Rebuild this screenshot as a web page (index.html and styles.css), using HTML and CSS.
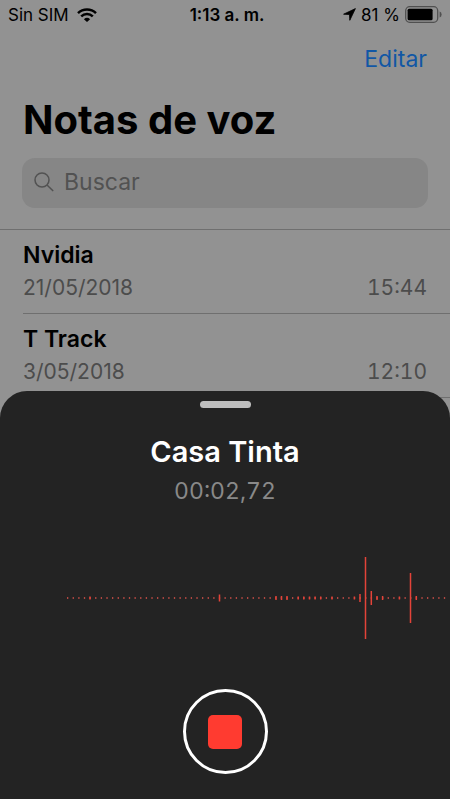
FILE: index.html
```html
<!DOCTYPE html>
<html lang="es">
<head>
<meta charset="utf-8">
<meta name="viewport" content="width=device-width, initial-scale=1">
<title>Notas de voz</title>
<link rel="stylesheet" href="styles.css">
</head>
<body>
<main class="library">
  <header class="status">
    <div class="status-side">
      <span>Sin SIM</span>
      <svg class="wifi" viewBox="0 0 20 14" aria-hidden="true">
        <path d="M1 5.2a13 13 0 0 1 18 0M4.2 8.3a8.4 8.4 0 0 1 11.6 0" fill="none" stroke="#000" stroke-width="2.5"/>
        <path d="M6.9 11.200a4.600 4.600 0 0 1 6.200 0L10 14z"/>
      </svg>
    </div>
    <span class="clock">1:13 a. m.</span>
    <div class="status-side status-end">
      <svg class="location" viewBox="0 0 13 13" aria-hidden="true"><path d="M12.400.6 6.800 12.300 6.500 6.500.6 6.200z" stroke="#000" stroke-width=".8" stroke-linejoin="round"/></svg>
      <span>81 %</span>
      <svg class="battery" viewBox="0 0 37 17" aria-hidden="true">
        <rect x=".7" y=".7" width="32" height="15.6" rx="4" fill="none" stroke="#505050" stroke-width="1.3"/>
        <rect x="2.6" y="2.8" width="25" height="11.4" rx="1.5"/>
        <path d="M34.6 5.5v6q2-.7 2-3t-2-3z" fill="#505050"/>
      </svg>
    </div>
  </header>
  <nav class="toolbar"><button class="edit" type="button">Editar</button></nav>
  <h1 class="title">Notas de voz</h1>
  <label class="search">
    <svg class="glass" viewBox="0 0 20 20" aria-hidden="true"><circle cx="8" cy="8" r="7"/><path d="m13 13 6.200 6"/></svg>
    <input class="search-input" type="search" placeholder="Buscar" aria-label="Buscar">
  </label>
  <ul class="notes">
    <li class="note">
      <h2 class="note-name">Nvidia</h2>
      <div class="note-meta"><span>21/05/2018</span><span class="duration">15:44</span></div>
    </li>
    <li class="note">
      <h2 class="note-name">T Track</h2>
      <div class="note-meta"><span>3/05/2018</span><span class="duration">12:10</span></div>
    </li>
  </ul>
</main>
<section class="sheet">
  <div class="grabber"></div>
  <h2 class="recording-name">Casa Tinta</h2>
  <div class="timer">00:02,72</div>
  <svg class="wave" viewBox="0 0 450 84" aria-hidden="true">
    <path class="wave-quiet" d="M67 42H446"/>
    <path class="wave-loud" d="M90 40.500v3M219.500 38.500v7M276 40v4M281.500 40v4M287 40v4M298.200 40.500v3M303.800 40.500v3M309.500 40.500v3M315.100 40.500v3M320.700 40.500v3M332 40.500v3M354.400 40.500v3M360 38v8M365.500 1v82M371.300 35v14M377 40v4M382.600 40v4M399.400 40.500v3M410.500 17v50M416.300 40v4"/>
  </svg>
  <button class="stop" type="button" aria-label="Detener"><span class="stop-mark"></span></button>
</section>
</body>
</html>
```
FILE: styles.css
```css
* {
  box-sizing: border-box;
}

body {
  margin: 0;
  min-height: 100vh;
  overflow: hidden;
  background: #929292;
  color: #000;
  font-family: Inter, "Liberation Sans", sans-serif;
}

h1,
h2,
ul {
  margin: 0;
  padding: 0;
}

button {
  border: 0;
  padding: 0;
  background: none;
  font: inherit;
}

.status {
  display: grid;
  grid-template-columns: 1fr auto 1fr;
  align-items: center;
  height: 29px;
  padding: 0 8px;
  font-size: 17px;
}

.status-side {
  display: flex;
  align-items: center;
  gap: 8px;
}

.status-end {
  justify-content: flex-end;
  gap: 5px;
}

.clock {
  padding-left: 4px;
  font-weight: 600;
}

.wifi {
  width: 20px;
  height: 14px;
}

.location {
  width: 13px;
  height: 13px;
}

.battery {
  width: 37px;
  height: 17px;
}

.toolbar {
  display: flex;
  justify-content: flex-end;
  padding: 15px 23px 14px;
}

.edit {
  color: #1157a5;
  font-size: 23px;
  line-height: 30px;
}

.title {
  padding: 8px 23px 14px;
  font-size: 40px;
  line-height: 48px;
  font-weight: 700;
}

.search {
  display: flex;
  align-items: center;
  gap: 10px;
  height: 50px;
  margin: 0 22px;
  padding: 0 12px 2px;
  border-radius: 13px;
  background: #868686;
}

.glass {
  width: 20px;
  height: 20px;
  fill: none;
  stroke: #525252;
  stroke-width: 1.5;
}

.search-input {
  flex: 1;
  min-width: 0;
  border: 0;
  padding: 0;
  outline: 0;
  background: none;
  font: inherit;
  font-size: 23px;
}

.search-input::placeholder {
  color: #525252;
}

.notes {
  margin-top: 21px;
  padding-left: 23px;
  border-top: 1px solid #6f6f6f;
  list-style: none;
}

.note {
  padding: 9px 23px 8px 0;
  border-bottom: 1px solid #6f6f6f;
}

.note-name {
  font-size: 23px;
  line-height: 32px;
  font-weight: 600;
}

.note-meta {
  display: flex;
  justify-content: space-between;
  color: #4c4c4c;
  font-size: 21px;
  line-height: 34px;
}

.duration,
.timer {
  font-variant-numeric: tabular-nums;
}

.sheet {
  position: fixed;
  inset: auto 0 0;
  display: flex;
  flex-direction: column;
  align-items: center;
  padding: 10px 0 25px;
  border-radius: 27px 27px 0 0;
  background: #232323;
}

.grabber {
  width: 51px;
  height: 7px;
  border-radius: 4px;
  background: #bebebe;
}

.recording-name {
  margin-top: 26px;
  color: #fff;
  font-size: 29px;
  line-height: 36px;
  font-weight: 600;
}

.timer {
  margin-top: 5px;
  color: #898989;
  font-size: 23px;
  line-height: 32px;
}

.wave {
  width: 100%;
  margin: 49px 0;
  fill: none;
  stroke: #e34339;
}

.wave-quiet {
  stroke: #b04741;
  stroke-width: 2;
  stroke-dasharray: 1.300 4.325;
}

.wave-loud {
  stroke-width: 1.5;
}

.stop {
  display: grid;
  place-items: center;
  width: 85px;
  height: 85px;
  border: 3px solid #fff;
  border-radius: 50%;
}

.stop-mark {
  width: 34px;
  height: 34px;
  border-radius: 5px;
  background: #ff3b30;
}
```
